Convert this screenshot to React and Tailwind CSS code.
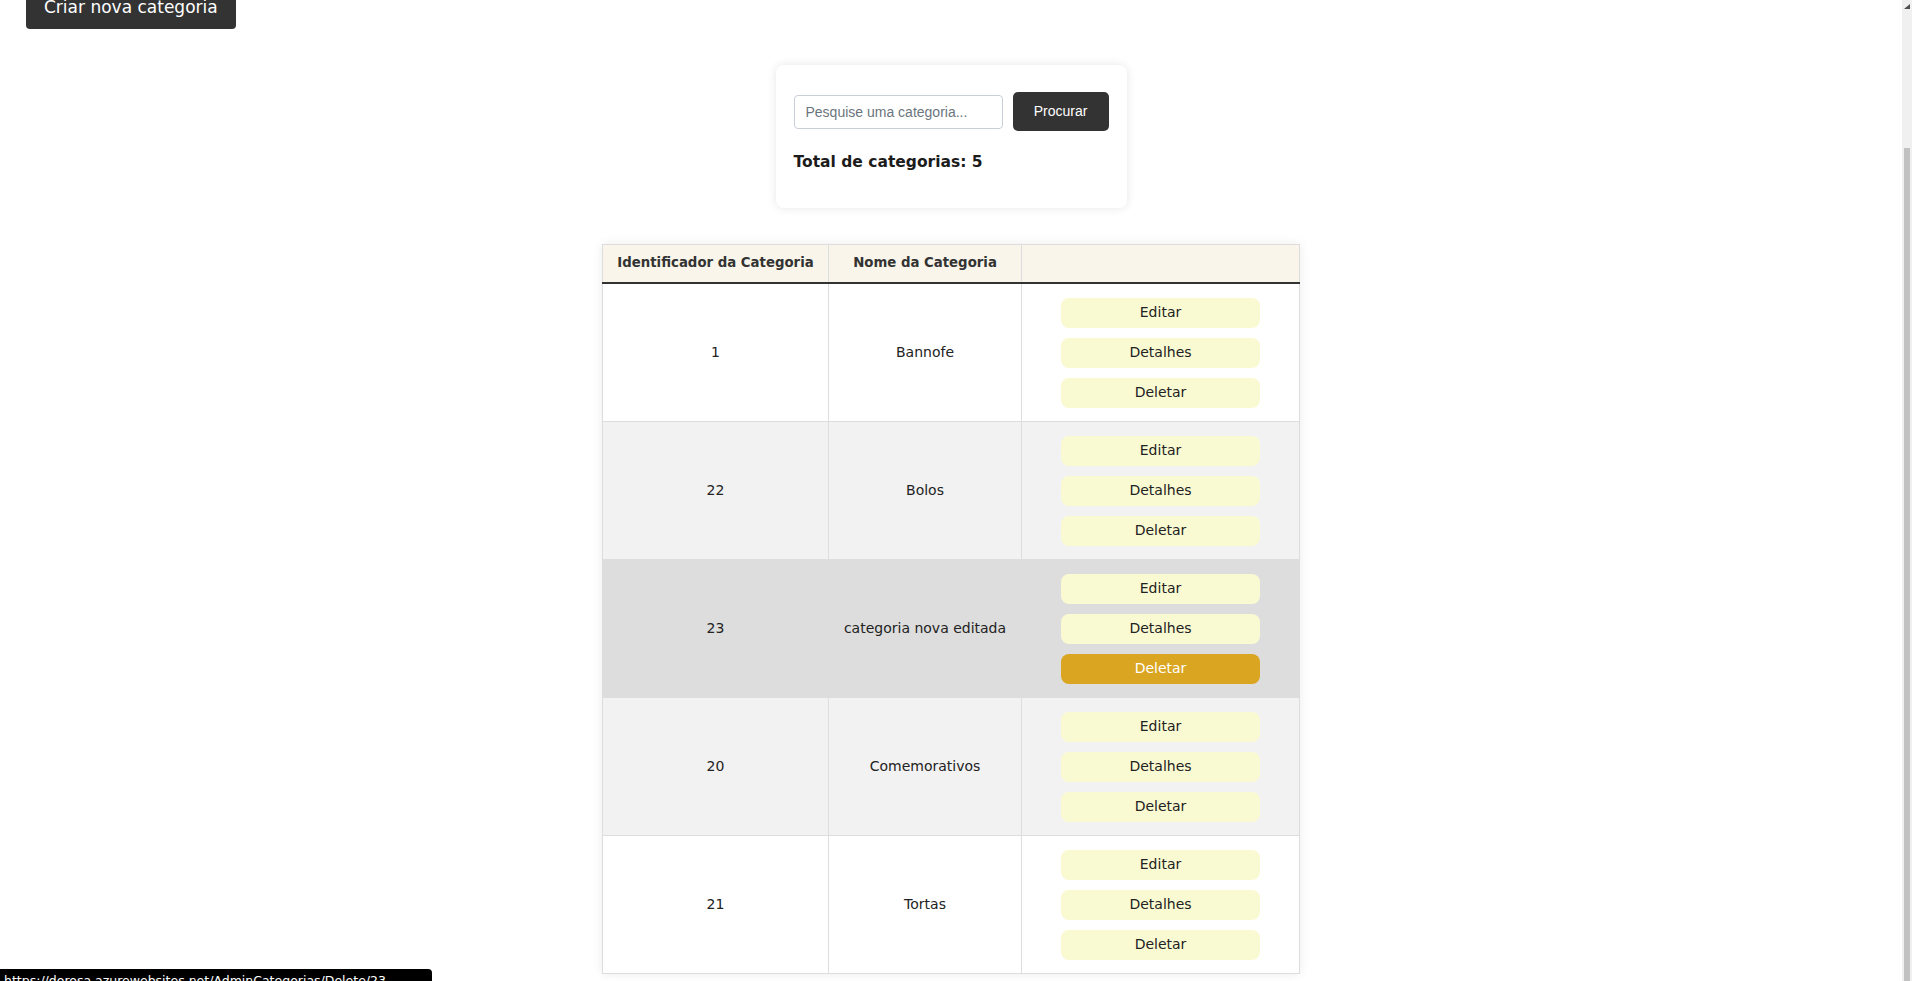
import React from 'react';

const categorias = [
    { id: 1, nome: 'Bannofe', bg: 'bg-white' },
    { id: 22, nome: 'Bolos', bg: 'bg-[#f2f2f2]' },
    { id: 23, nome: 'categoria nova editada', bg: 'bg-[#dddddd]', hover: true },
    { id: 20, nome: 'Comemorativos', bg: 'bg-[#f2f2f2]' },
    { id: 21, nome: 'Tortas', bg: 'bg-white' },
];

const ActionButton = ({ children, active }) => (
    <button
        className={
            active
                ? 'w-[199px] h-[30px] rounded-[8px] bg-[#daa520] text-white text-[14px]'
                : 'w-[199px] h-[30px] rounded-[8px] bg-[#fafad2] text-[#222] text-[14px]'
        }
    >
        {children}
    </button>
);

const App = () => {
    return (
        <div className="h-screen overflow-y-auto bg-white font-['DejaVu_Sans',sans-serif] text-[#222]">
            <div className="pr-[10px] pb-[40px]">
                <button className="ml-[26px] -mt-[14px] h-[43px] px-[18px] rounded-[4px] bg-[#333] text-white text-[17px] block">
                    Criar nova categoria
                </button>

                <div className="mx-auto mt-[36px] w-[351px] rounded-[8px] bg-white shadow-[0_0_10px_rgba(0,0,0,0.1)] px-[18px] pt-[27px] pb-[36px]">
                    <div className="flex items-center gap-[10px]">
                        <input
                            type="text"
                            placeholder="Pesquise uma categoria..."
                            className="w-[209px] h-[34px] rounded-[4px] border border-[#c9cfd8] px-[11px] text-[14px] font-['Liberation_Sans',sans-serif] placeholder:text-[#6c757d] outline-none"
                        />
                        <button className="w-[96px] h-[39px] rounded-[5px] bg-[#333] text-white text-[14px] font-['Liberation_Sans',sans-serif]">
                            Procurar
                        </button>
                    </div>
                    <h2 className="mt-[21px] text-[15.5px] leading-[20px] font-bold text-[#1c1c1c]">
                        Total de categorias: 5
                    </h2>
                </div>

                <table className="mx-auto mt-[36px] w-[697px] border-collapse border border-[#dddddd] shadow-[0_0_10px_rgba(0,0,0,0.08)] table-fixed">
                    <colgroup>
                        <col className="w-[226px]" />
                        <col className="w-[193px]" />
                        <col className="w-[278px]" />
                    </colgroup>
                    <thead>
                        <tr className="bg-[#f9f5ea] border-b-2 border-[#333]">
                            <th className="h-[38px] border-x border-[#dddddd] text-[13.3px] font-bold text-[#333]">
                                Identificador da Categoria
                            </th>
                            <th className="h-[38px] border-x border-[#dddddd] text-[13.3px] font-bold text-[#333]">
                                Nome da Categoria
                            </th>
                            <th className="h-[38px] border-x border-[#dddddd]"></th>
                        </tr>
                    </thead>
                    <tbody>
                        {categorias.map((c) => (
                            <tr key={c.id} className={`${c.bg} border-b border-[#dddddd]`}>
                                <td className="border-x border-[#dddddd] text-center text-[14px]">{c.id}</td>
                                <td className="border-x border-[#dddddd] text-center text-[14px]">{c.nome}</td>
                                <td className="border-x border-[#dddddd] pt-[14px] pb-[13px]">
                                    <div className="flex flex-col items-center gap-[10px]">
                                        <ActionButton>Editar</ActionButton>
                                        <ActionButton>Detalhes</ActionButton>
                                        <ActionButton active={c.hover}>Deletar</ActionButton>
                                    </div>
                                </td>
                            </tr>
                        ))}
                    </tbody>
                </table>
            </div>

            {/* barra de rolagem do navegador */}
            <div className="fixed right-0 top-0 w-[10px] h-screen bg-[#f0f0f0] flex flex-col items-center">
                <svg width="8" height="8" viewBox="0 0 8 8" className="mt-[3px]">
                    <path d="M1 6 L7 6 L7 1 Z" fill="#505050" />
                </svg>
                <div className="mt-[137px] w-[6px] flex-1 bg-[#c1c1c1]" />
            </div>

            <div className="fixed left-0 top-[969px] w-[432px] h-[24px] rounded-tr-[4px] bg-black px-[4px] pt-[4px] text-[12.5px] leading-[16px] text-white whitespace-nowrap overflow-hidden">
                https://dorosa.azurewebsites.net/AdminCategorias/Delete/23
            </div>
        </div>
    );
};

export default App;
